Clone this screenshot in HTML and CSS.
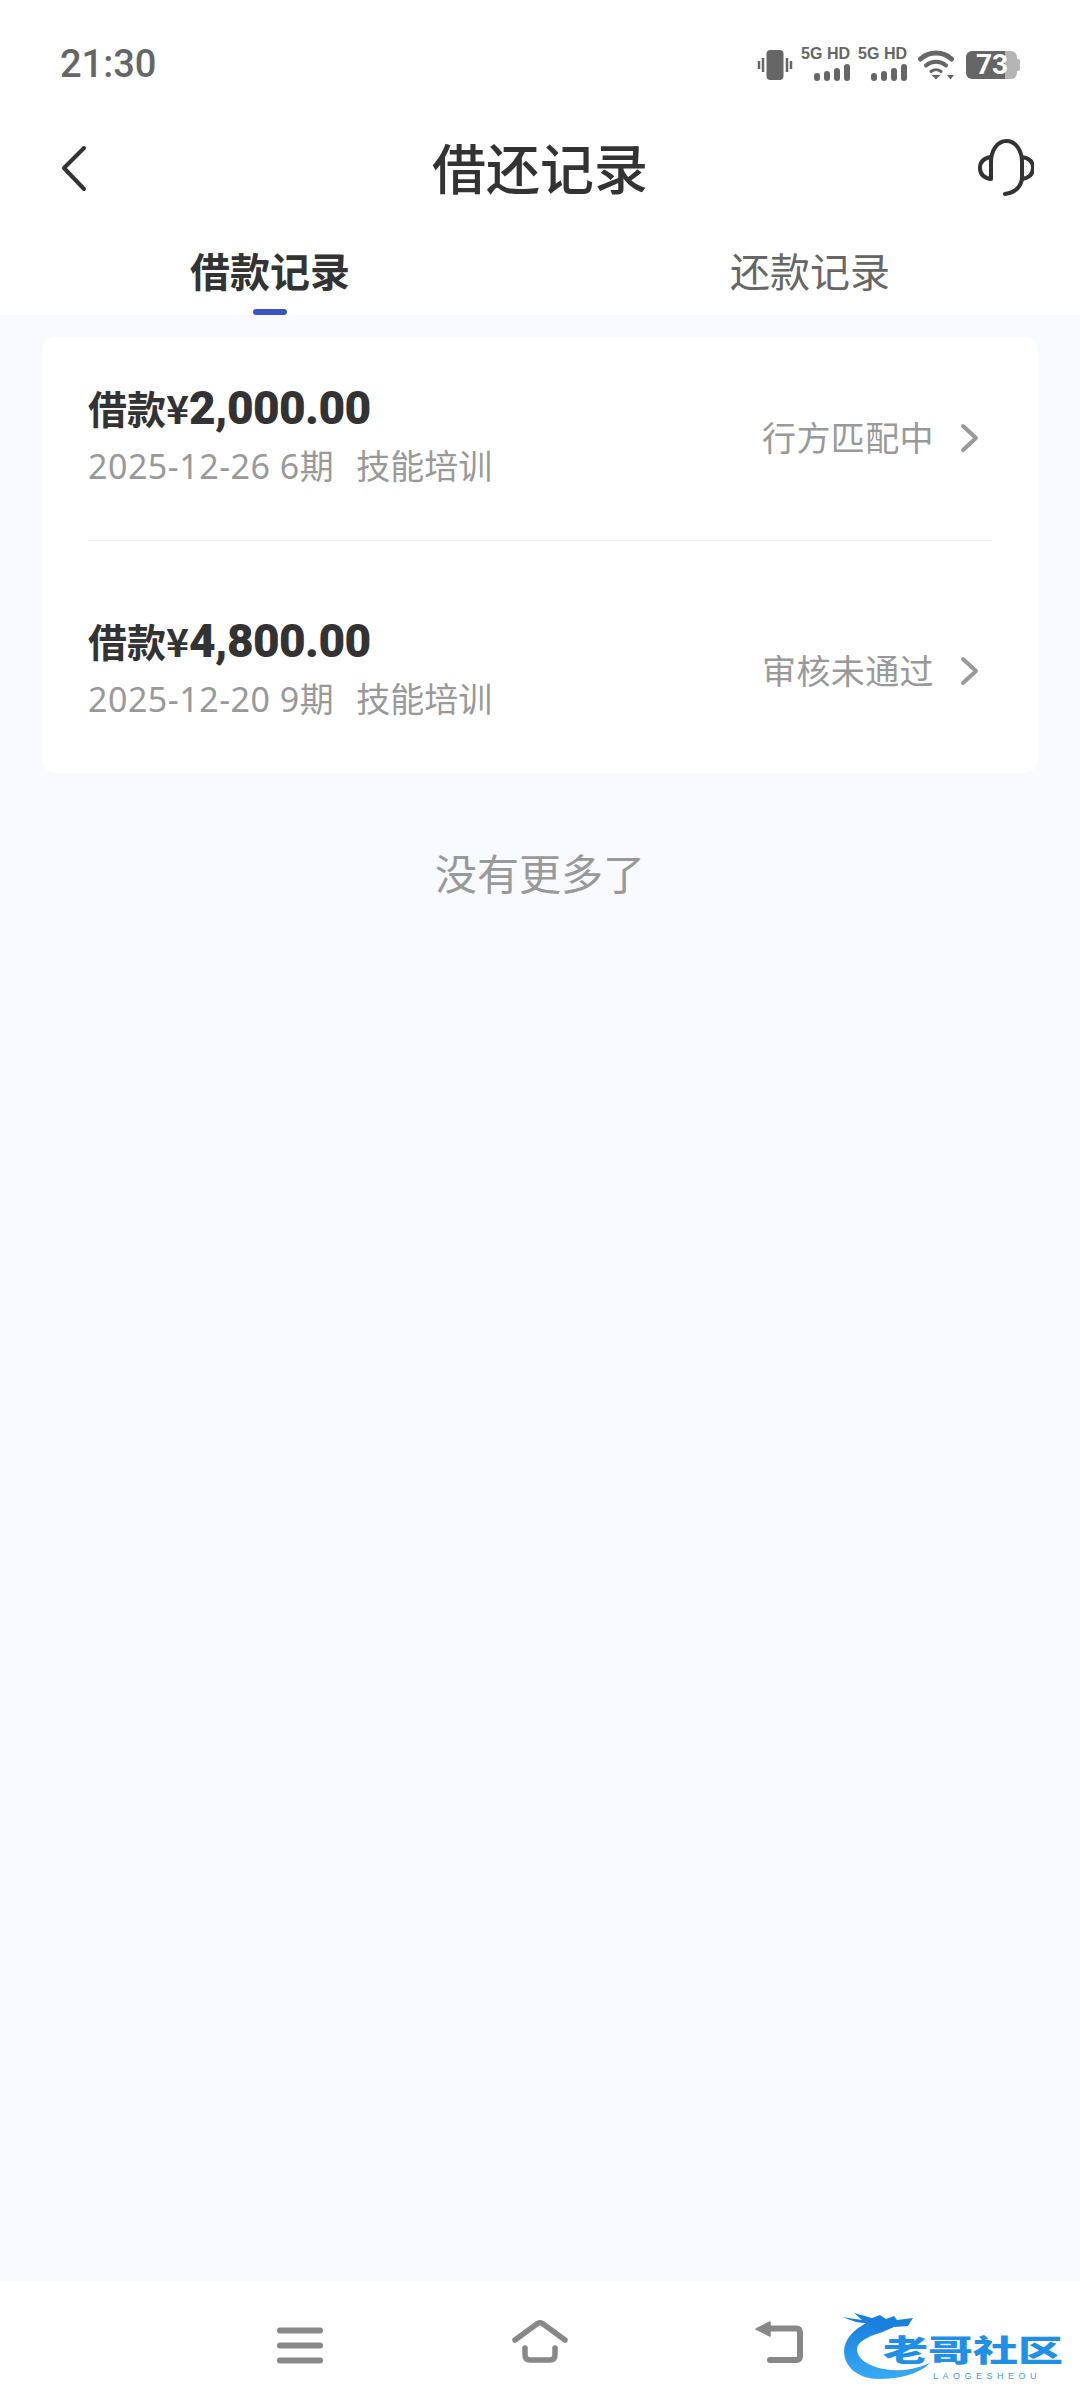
FILE: index.html
```html
<!DOCTYPE html>
<html lang="zh-CN">
<head>
    <meta charset="UTF-8">
    <meta name="viewport" content="width=device-width, initial-scale=1.0">
    <title>借还记录</title>
    <link rel="stylesheet" href="styles.css">
</head>
<body>
    <div class="page">
        <!-- Status bar -->
        <div class="status-bar">
            <span class="time">21:30</span>
            <div class="status-icons">
                <svg class="icon-vibrate" width="36" height="30" viewBox="0 0 36 30">
                    <rect x="9.500" y="0" width="17" height="30" rx="4" fill="#666"/>
                    <path d="M6 8v14M2 11v8M30 8v14M34 11v8" stroke="#666" stroke-width="2.500" fill="none"/>
                </svg>
                <div class="signal">
                    <span class="signal-label">5G HD</span>
                    <svg width="36" height="17" viewBox="0 0 36 17" class="signal-bars">
                        <rect x="0" y="9" width="6" height="8" rx="3" fill="#666"/>
                        <rect x="10" y="7" width="6" height="10" rx="3" fill="#666"/>
                        <rect x="20" y="4" width="6" height="13" rx="3" fill="#666"/>
                        <rect x="30" y="0" width="6" height="17" rx="3" fill="#666"/>
                    </svg>
                </div>
                <div class="signal">
                    <span class="signal-label">5G HD</span>
                    <svg width="36" height="17" viewBox="0 0 36 17" class="signal-bars">
                        <rect x="0" y="9" width="6" height="8" rx="3" fill="#666"/>
                        <rect x="10" y="7" width="6" height="10" rx="3" fill="#666"/>
                        <rect x="20" y="4" width="6" height="13" rx="3" fill="#666"/>
                        <rect x="30" y="0" width="6" height="17" rx="3" fill="#666"/>
                    </svg>
                </div>
                <svg class="icon-wifi" width="37" height="30" viewBox="0 0 37 30">
                    <path d="M2.500 9C11 1 25 1 33.500 9" stroke="#666" stroke-width="5" stroke-linecap="round" fill="none"/>
                    <path d="M8 15.500C14 10.500 22 10.500 28 15.500" stroke="#666" stroke-width="4" stroke-linecap="round" fill="none"/>
                    <path d="M13 21.500C16 19 20 19 23 21.500" stroke="#666" stroke-width="3" stroke-linecap="round" fill="none"/>
                    <path d="M13.500 25H22.500L18 29.500Z" fill="#666"/>
                    <path d="M29 25H36L32.500 29.500Z" fill="#666"/>
                </svg>
                <div class="battery">
                    <span class="battery-level">73</span>
                    <span class="battery-cap"></span>
                </div>
            </div>
        </div>

        <!-- Title -->
        <div class="header">
            <svg class="back" width="30" height="50" viewBox="0 0 30 50">
                <path d="M25 5L5 25L25 46" stroke="#333" stroke-width="4" stroke-linecap="round" stroke-linejoin="round" fill="none"/>
            </svg>
            <h1>借还记录</h1>
            <svg class="service" width="56" height="58" viewBox="0 0 56 58">
                <path d="M13 40V23C13 12 19 2 28.500 2C38 2 44 12 44 23V38C44 47 37 54 27 55" stroke="#333" stroke-width="4" stroke-linecap="round" fill="none"/>
                <path d="M13 18C6 19 2 23 2 29C2 35 6 39 13 40" stroke="#333" stroke-width="4" fill="none"/>
                <path d="M44 18C51 19 55 23 55 29C55 35 51 39 44 40" stroke="#333" stroke-width="4" fill="none"/>
            </svg>
        </div>

        <!-- Tabs -->
        <div class="tabs">
            <div class="tab active">
                <span>借款记录</span>
                <i class="tab-line"></i>
            </div>
            <div class="tab">
                <span>还款记录</span>
            </div>
        </div>

        <div class="content">
            <div class="card">
                <div class="loan">
                    <div class="loan-info">
                        <div class="amount">借款¥<b>2,000.00</b></div>
                        <div class="meta"><span class="date">2025-12-26 6期</span><span class="purpose">技能培训</span></div>
                    </div>
                    <div class="loan-status">
                        <span>行方匹配中</span>
                        <svg width="20" height="30" viewBox="0 0 20 30">
                            <path d="M3 3L16 15L3 27" stroke="#999" stroke-width="4" stroke-linecap="round" stroke-linejoin="round" fill="none"/>
                        </svg>
                    </div>
                </div>
                <div class="loan">
                    <div class="loan-info">
                        <div class="amount">借款¥<b>4,800.00</b></div>
                        <div class="meta"><span class="date">2025-12-20 9期</span><span class="purpose">技能培训</span></div>
                    </div>
                    <div class="loan-status">
                        <span>审核未通过</span>
                        <svg width="20" height="30" viewBox="0 0 20 30">
                            <path d="M3 3L16 15L3 27" stroke="#999" stroke-width="4" stroke-linecap="round" stroke-linejoin="round" fill="none"/>
                        </svg>
                    </div>
                </div>
            </div>
            <p class="no-more">没有更多了</p>
        </div>

        <!-- System navigation -->
        <div class="nav-bar">
            <svg width="56" height="56" viewBox="0 0 56 56">
                <path d="M8 13.500H48M8 28.500H48M8 43.500H48" stroke="#888" stroke-width="6" stroke-linecap="round" fill="none"/>
            </svg>
            <svg width="56" height="56" viewBox="0 0 56 56">
                <path d="M3 23L25.500 6.500Q28 5 30.500 6.500L53 23" stroke="#888" stroke-width="5.500" stroke-linecap="round" stroke-linejoin="round" fill="none"/>
                <path d="M13 31V38Q13 43 18 43H38Q43 43 43 38V31" stroke="#888" stroke-width="5.500" stroke-linecap="round" fill="none"/>
            </svg>
            <svg width="56" height="56" viewBox="0 0 56 56">
                <path d="M16 11.500H44Q48 11.500 48 15.500V39Q48 43 44 43H18" stroke="#888" stroke-width="6" stroke-linecap="round" fill="none"/>
                <path d="M4 12L18 5V19Z" fill="#888" stroke="#888" stroke-width="1.500" stroke-linejoin="round"/>
            </svg>

            <!-- Watermark -->
            <div class="watermark">
                <svg class="dragon" width="90" height="70" viewBox="0 0 90 70">
                    <defs>
                        <linearGradient id="dragonFill" x1="0" y1="0" x2="0" y2="1">
                            <stop offset="0" stop-color="#1a80de"/>
                            <stop offset="1" stop-color="#38aaf4"/>
                        </linearGradient>
                    </defs>
                    <path d="M26 9C10 17 2 28 2 38C2 55 18 66 36 66C56 66 76 62 88 50C72 57 56 59 42 56C26 53 15 46 15 36C15 30 24 24 38 20L30 10Z" fill="url(#dragonFill)"/>
                    <path d="M0 4L20 7L12 0L30 5L38 2L44 6L52 3L55 7L71 5L66 13L52 14L38 20L28 11L14 9Z" fill="#1a80de"/>
                </svg>
                <span class="wm-name">老哥社区</span>
                <span class="wm-sub">LAOGESHEOU</span>
            </div>
        </div>
    </div>
</body>
</html>
```

FILE: styles.css
```css
* {
    box-sizing: border-box;
}

body {
    margin: 0;
    background: #fff;
    font-family: 'Noto Sans', 'Noto Sans CJK SC', sans-serif;
}

.page {
    display: flex;
    flex-direction: column;
    width: 1080px;
    height: 2408px;
    overflow: hidden;
}

/* Status bar */
.status-bar {
    display: flex;
    justify-content: space-between;
    align-items: center;
    height: 130px;
    padding: 0 60px;
}

.time {
    margin-top: -2px;
    font-family: Roboto, sans-serif;
    font-size: 38px;
    font-weight: 500;
    color: #666;
}

.status-icons {
    display: flex;
    align-items: center;
    gap: 9px;
}

.signal {
    display: flex;
    flex-direction: column;
    align-items: flex-end;
    gap: 4px;
    width: 48px;
    margin-top: -3px;
}

.signal-label {
    font-family: 'Liberation Sans', sans-serif;
    font-size: 16px;
    font-weight: 700;
    line-height: 13px;
    color: #666;
    white-space: nowrap;
}

.signal-bars {
    display: block;
}

.icon-wifi {
    margin-left: 2px;
}

.battery {
    display: flex;
    align-items: center;
    margin-left: 2px;
}

.battery-level {
    width: 51px;
    height: 28px;
    padding-left: 10px;
    border-radius: 6px;
    background: linear-gradient(90deg, #666 76%, #b5b5b5 76%);
    font-family: Roboto, sans-serif;
    font-size: 28px;
    font-weight: 700;
    line-height: 28px;
    color: #fff;
}

.battery-cap {
    width: 3px;
    height: 12px;
    border-radius: 0 2px 2px 0;
    background: #b5b5b5;
}

/* Header */
.header {
    display: grid;
    grid-template-columns: 1fr auto 1fr;
    align-items: center;
    height: 76px;
    padding: 0 46px;
}

.back {
    margin-left: 13px;
}

.header h1 {
    margin: -2px 0 0;
    font-family: 'Noto Sans CJK SC', sans-serif;
    font-size: 54px;
    font-weight: 500;
    line-height: 76px;
    color: #333;
}

.service {
    justify-self: end;
}

/* Tabs */
.tabs {
    display: grid;
    grid-template-columns: 1fr 1fr;
    height: 109px;
}

.tab {
    display: flex;
    flex-direction: column;
    align-items: center;
    padding-top: 37px;
    font-family: 'Noto Sans CJK SC', sans-serif;
    font-size: 40px;
    line-height: 54px;
    color: #666;
}

.tab.active {
    font-weight: 700;
    color: #333;
}

.tab-line {
    width: 34px;
    height: 6px;
    margin-top: 12px;
    border-radius: 3px;
    background: #3a53c8;
}

/* List */
.content {
    flex: 1;
    padding: 22px 42px 0;
    background: #f9fafe;
}

.card {
    padding: 0 46px;
    border-radius: 14px;
    background: #fff;
}

.loan {
    display: flex;
    justify-content: space-between;
    align-items: flex-start;
    padding: 43px 12px 51px 0;
    border-bottom: 1px solid #eeeff2;
}

.loan + .loan {
    padding-top: 72px;
    border-bottom: none;
}

.amount {
    font-family: 'Noto Sans CJK SC', sans-serif;
    font-size: 39px;
    font-weight: 700;
    line-height: 54px;
    color: #333;
}

.amount b {
    font-family: Roboto, sans-serif;
    font-size: 46px;
    letter-spacing: -0.6px;
}

.meta {
    margin-top: 8px;
    font-size: 34px;
    line-height: 46px;
    color: #999;
}

.date {
    letter-spacing: 0.5px;
}

.purpose {
    margin-left: 22px;
}

.loan-status {
    display: flex;
    align-items: center;
    gap: 26px;
    margin-top: 35px;
    font-size: 34px;
    letter-spacing: 0.4px;
    line-height: 46px;
    color: #999;
}

.no-more {
    margin: 71px 0 0;
    font-size: 42px;
    line-height: 60px;
    text-align: center;
    color: #999;
}

/* Navigation */
.nav-bar {
    position: relative;
    display: flex;
    justify-content: center;
    align-items: center;
    gap: 184px;
    height: 127px;
    background: #fff;
}

.watermark {
    position: absolute;
    left: 842px;
    top: 32px;
    width: 222px;
    height: 70px;
}

.dragon {
    position: absolute;
    left: 0;
    top: 0;
}

.wm-name {
    position: absolute;
    left: 41px;
    top: 21px;
    font-family: 'Noto Sans CJK SC', sans-serif;
    font-size: 30px;
    font-weight: 900;
    line-height: 28px;
    white-space: nowrap;
    color: #1f8fe8;
    transform: scaleX(1.5);
    transform-origin: left center;
}

.wm-sub {
    position: absolute;
    left: 91px;
    top: 58px;
    font-family: 'Liberation Sans', sans-serif;
    font-size: 9px;
    line-height: 10px;
    letter-spacing: 4.500px;
    white-space: nowrap;
    color: #3a9be6;
}
```
